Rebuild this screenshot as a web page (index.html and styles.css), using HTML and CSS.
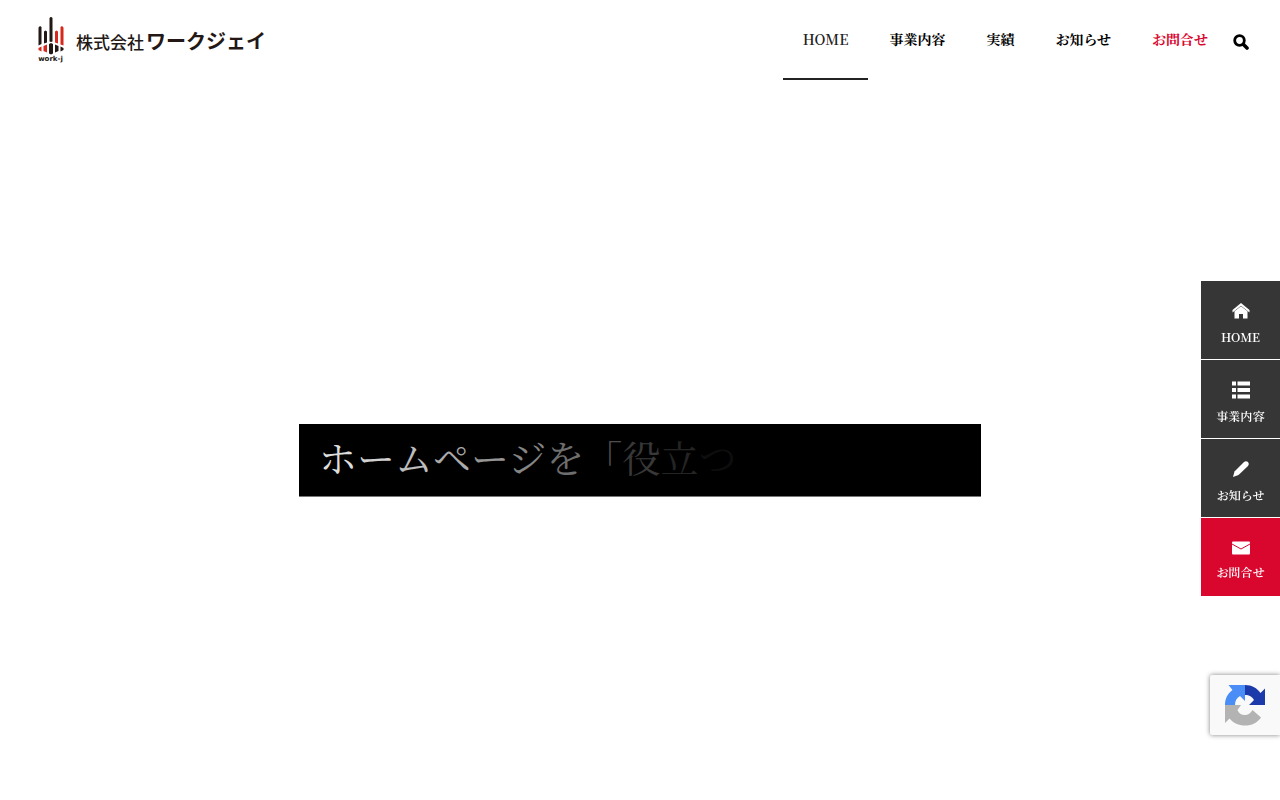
FILE: index.html
```html
<!DOCTYPE html>
<html lang="ja">
<head>
  <meta charset="UTF-8">
  <meta name="viewport" content="width=device-width, initial-scale=1.0">
  <title>株式会社ワークジェイ</title>
  <link rel="stylesheet" href="styles.css">
</head>
<body>

  <header class="header">
    <a href="#" class="logo">
      <span class="logo-mark">
        <svg width="26" height="39" viewBox="0 0 26 39">
          <path fill="#231815" d="M.5 11.500L2 10L3.500 11V28L.5 29.500ZM6 15.500L7.500 14.500L9 15.500V26.500L6 27.500ZM11.500 2Q13 0 14.500 2V25.500L13 26L11.500 25.500Z"/>
          <path fill="#d7281d" d="M17 15.500L18.500 14.500L20 15.500V27.500L17 26.500ZM22.500 11L24 10L25.500 11.500V29.500L22.500 28.500Z"/>
          <path fill="#d7281d" d="M.5 32L3.500 30.500V35.500L.5 34ZM5.500 30L9 28.500V36.500L5.500 35Z"/>
          <path fill="#231815" d="M11 28L13 27L15 28V37.500L13 38.500L11 37.500ZM17 28.500L20.500 30V35L17 36.500ZM22.500 30.500L25.500 32V34L22.500 35.500Z"/>
        </svg>
        <span class="logo-sub">work-j</span>
      </span>
      <span class="logo-name"><span class="logo-kabu">株式会社</span><span class="logo-work">ワークジェイ</span></span>
    </a>

    <nav class="nav">
      <a href="#" class="nav-item active">HOME</a>
      <a href="#" class="nav-item">事業内容</a>
      <a href="#" class="nav-item">実績</a>
      <a href="#" class="nav-item">お知らせ</a>
      <a href="#" class="nav-item contact">お問合せ</a>
      <button type="button" class="search" aria-label="検索">
        <svg width="16" height="16" viewBox="0 0 16 16">
          <circle cx="6.500" cy="6.500" r="4.800" fill="none" stroke="#000" stroke-width="2.800"/>
          <path d="M10.500 10.500L14 14" stroke="#000" stroke-width="3.600" stroke-linecap="round"/>
        </svg>
      </button>
    </nav>
  </header>

  <main class="hero">
    <h1 class="copy"><span>ホ</span><span>ー</span><span>ム</span><span>ペ</span><span>ー</span><span>ジ</span><span>を</span><span>「</span><span>役</span><span>立</span><span>つ</span></h1>
  </main>

  <aside class="side">
    <a href="#" class="side-item">
      <svg width="18" height="18" viewBox="0 0 18 18" fill="#fff">
        <path d="M9 1L0.500 8V10.500L9 3.800L17.500 10.500V8Z"/>
        <path d="M9 4.200L2.500 9.200V16.500H7V12H11V16.500H15.500V9.200Z"/>
      </svg>
      <span>HOME</span>
    </a>
    <a href="#" class="side-item">
      <svg width="18" height="18" viewBox="0 0 18 18" fill="#fff">
        <path d="M0 .5H4V4.500H0ZM5.500 .5H18V4.500H5.500ZM0 7H4V11H0ZM5.500 7H18V11H5.500ZM0 13.500H4V17.500H0ZM5.500 13.500H18V17.500H5.500Z"/>
      </svg>
      <span>事業内容</span>
    </a>
    <a href="#" class="side-item">
      <svg width="18" height="18" viewBox="0 0 18 18" fill="#fff">
        <path d="M1 17L2.500 11.500L12 2Q14 .3 16 2Q17.700 4 16 6L6.500 15Z"/>
      </svg>
      <span>お知らせ</span>
    </a>
    <a href="#" class="side-item side-contact">
      <svg width="18" height="18" viewBox="0 0 18 18">
        <rect y="2.500" width="18" height="13" rx="1" fill="#fff"/>
        <path d="M0 5L9 10L18 5" fill="none" stroke="#d9062e" stroke-width="1"/>
      </svg>
      <span>お問合せ</span>
    </a>
  </aside>

  <div class="badge">
    <svg width="42" height="42" viewBox="0 0 42 42">
      <path fill="#1c3aa9" d="M21 1C28 1 33 4 36.500 9L41 4.500V21H25L30 16C28 12.500 25.500 11 21 11Z"/>
      <path fill="#4a8df6" d="M21 1H4.500L8.500 6C3.500 9.500 1 15 1 21H11C11 17 12.500 14 16 12L21 17Z"/>
      <path fill="#b3b3b3" d="M1 21V39L5.500 34.500C9 39 15 41.500 21 41.500C28 41.500 33 39 37 33.500L28.500 26C26.500 29.500 24 31 21 31C17 31 14.500 29 13.500 26L17 21Z"/>
    </svg>
  </div>

</body>
</html>
```
FILE: styles.css
```css
* {
  box-sizing: border-box;
}

body {
  margin: 0;
  background-color: #fff;
  color: #000;
  font-family: "Noto Serif JP", "Liberation Serif", "Noto Sans CJK JP", serif;
}

a {
  color: inherit;
  text-decoration: none;
}

svg {
  display: block;
}

/* header */
.header {
  display: flex;
  justify-content: space-between;
  height: 80px;
  padding: 0 31px 0 37px;
}

.logo {
  display: flex;
  gap: 12px;
  padding-top: 16px;
  color: #231815;
  font-family: "Noto Sans CJK JP", sans-serif;
}

.logo-mark {
  display: flex;
  flex-direction: column;
  align-items: center;
  width: 27px;
}

.logo-sub {
  font: bold 7px/9px "DejaVu Sans", sans-serif;
}

.logo-name {
  display: flex;
  align-items: center;
  gap: 2px;
  height: 48px;
}

.logo-kabu {
  padding-top: 2px;
  font-size: 17px;
  font-weight: 500;
}

.logo-work {
  font-size: 20px;
  font-weight: 700;
}

.nav {
  display: flex;
  gap: 1px;
}

.nav-item {
  height: 80px;
  padding: 0 20px;
  font-size: 14px;
  font-weight: 700;
  line-height: 78px;
}

.nav-item.active {
  border-bottom: 2px solid #222;
  color: #222;
  font-weight: 600;
}

.nav-item.contact {
  color: #d9062e;
}

.search {
  align-self: center;
  margin: 4px 0 0 4px;
  padding: 0;
  border: 0;
  background: none;
  cursor: pointer;
}

/* hero */
.hero {
  display: flex;
  align-items: center;
  justify-content: center;
  min-height: calc(100vh - 80px);
  padding-top: 40px;
}

.copy {
  width: 682px;
  max-width: 100%;
  margin: 0;
  padding: 0 20px 6px;
  border-bottom: 1px solid #777;
  background-color: #000;
  color: #fff;
  font-size: 38px;
  font-weight: 400;
  line-height: 66px;
}

.copy span:nth-child(1) { opacity: .87; }
.copy span:nth-child(2) { opacity: .82; }
.copy span:nth-child(3) { opacity: .74; }
.copy span:nth-child(4) { opacity: .67; }
.copy span:nth-child(5) { opacity: .59; }
.copy span:nth-child(6) { opacity: .52; }
.copy span:nth-child(7) { opacity: .43; }
.copy span:nth-child(8) { opacity: .3; }
.copy span:nth-child(9) { opacity: .22; }
.copy span:nth-child(10) { opacity: .14; }
.copy span:nth-child(11) { opacity: .05; }

/* side menu */
.side {
  position: fixed;
  top: 281px;
  right: 0;
  display: flex;
  flex-direction: column;
  gap: 1px;
  width: 79px;
}

.side-item {
  display: flex;
  flex-direction: column;
  align-items: center;
  gap: 8px;
  height: 78px;
  padding-top: 21px;
  background-color: #363636;
  color: #fff;
  font-size: 12px;
  font-weight: 600;
  line-height: 18px;
}

.side-contact {
  gap: 6px;
  background-color: #d9062e;
}

.badge {
  position: fixed;
  right: 0;
  bottom: 65px;
  width: 70px;
  height: 60px;
  padding: 9px 14px;
  border-radius: 2px 0 0 2px;
  background-color: #f9f9f9;
  box-shadow: 0 0 5px gray;
}
```
